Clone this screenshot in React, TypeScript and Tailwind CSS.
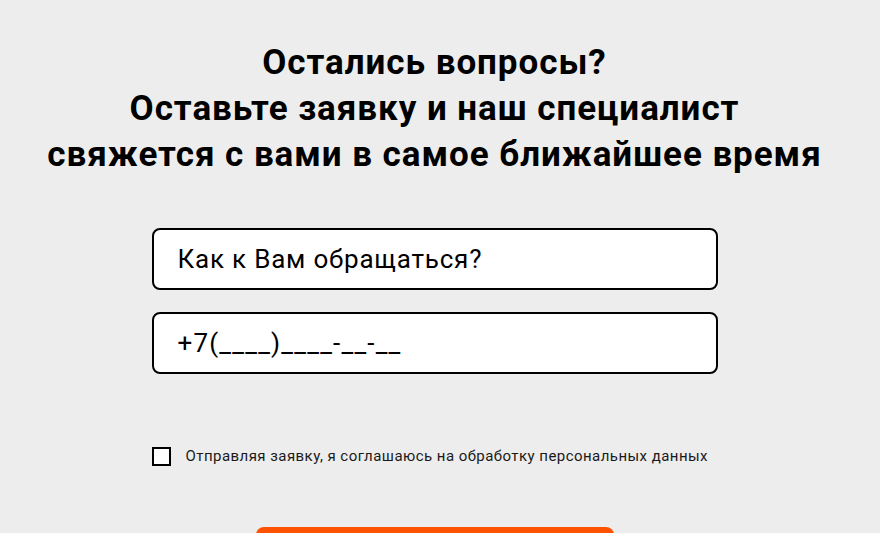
import * as React from "react"

export default function App() {
  const [name, setName] = React.useState("")
  const [phone, setPhone] = React.useState("")
  const [agree, setAgree] = React.useState(false)

  return (
    <div className="flex min-h-[533px] w-full flex-col items-center overflow-hidden bg-[#ededed] pr-[11px] pt-[40px] font-['Roboto',sans-serif] text-black">
      <h2 className="whitespace-nowrap text-center text-[35px] font-bold leading-[46px] tracking-[0.95px]">
        Остались вопросы?
        <br />
        Оставьте заявку и наш специалист
        <br />
        свяжется с вами в самое ближайшее время
      </h2>

      <form
        className="mt-[50px] flex w-[566px] flex-col"
        onSubmit={(e) => e.preventDefault()}
      >
        <input
          className="h-[62px] w-full rounded-[8px] border-2 border-black bg-white px-[24px] text-[26px] tracking-[0.8px] text-black outline-none placeholder:text-black"
          onChange={(e) => setName(e.target.value)}
          placeholder="Как к Вам обращаться?"
          type="text"
          value={name}
        />
        <input
          className="mt-[22px] h-[62px] w-full rounded-[8px] border-2 border-black bg-white px-[24px] text-[26px] tracking-[1.2px] text-black outline-none placeholder:text-black"
          onChange={(e) => setPhone(e.target.value)}
          placeholder="+7(____)____-__-__"
          type="tel"
          value={phone}
        />

        <label className="mt-[71px] flex cursor-pointer items-center gap-[15px] text-[15px] leading-[22px] tracking-[0.45px] text-[#1a1a1a]">
          <span
            className={`flex h-[19px] w-[19px] shrink-0 border-2 border-black ${agree ? "bg-black" : "bg-white"}`}
          >
            <input
              checked={agree}
              className="hidden"
              onChange={(e) => setAgree(e.target.checked)}
              type="checkbox"
            />
          </span>
          Отправляя заявку, я соглашаюсь на обработку персональных данных
        </label>

        <button
          className="mx-auto mt-[60px] h-[60px] w-[358px] rounded-[8px] bg-[#ff5200] text-[20px] font-bold text-white"
          type="submit"
        >
          Отправить
        </button>
      </form>
    </div>
  )
}
